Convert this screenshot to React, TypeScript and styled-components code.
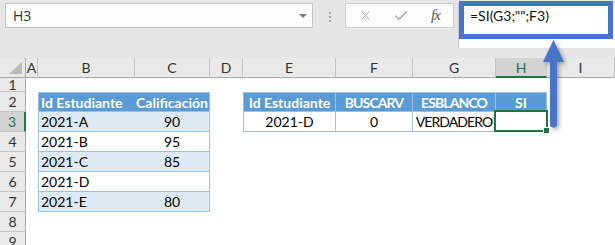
import React from 'react'
import styled, { createGlobalStyle } from 'styled-components'
import { X, Check } from 'lucide-react'

const GlobalStyle = createGlobalStyle`
  html, body {
    margin: 0;
    padding: 0;
    background: #fff;
  }
  body {
    font-family: Lato, "Liberation Sans", sans-serif;
    overflow: hidden;
  }
`

const Frame = styled.div`
  position: relative;
  width: 615px;
  height: 245px;
  overflow: hidden;
  background: #fff;
`

/* ---------- formula toolbar ---------- */

const Toolbar = styled.div`
  display: flex;
  align-items: flex-start;
  height: 58px;
  background: #e6e6e6;
`

const NameBox = styled.div`
  display: flex;
  align-items: center;
  justify-content: space-between;
  box-sizing: border-box;
  width: 308px;
  height: 25px;
  margin: 3px 0 0 5px;
  padding: 0 5px 0 7px;
  background: #fdfdfd;
  border: 1px solid #c6c6c6;
  font-family: "Open Sans", Lato, sans-serif;
  font-size: 14px;
  color: #333;
`

const Caret = styled.span`
  width: 0;
  height: 0;
  border-left: 4px solid transparent;
  border-right: 4px solid transparent;
  border-top: 4px solid #7a7a7a;
`

const Grip = styled.div`
  display: flex;
  flex-direction: column;
  gap: 2px;
  margin: 12px 0 0 16px;
`

const GripDot = styled.span`
  width: 2px;
  height: 2px;
  background: #a8a8a8;
`

const FnPanel = styled.div`
  display: grid;
  grid-template-columns: repeat(3, 35px);
  align-items: center;
  justify-items: center;
  box-sizing: border-box;
  width: 109px;
  height: 25px;
  margin: 3px 0 0 14px;
  padding-left: 2px;
  background: #fdfdfd;
  border: 1px solid #d0d0d0;
  color: #a8a8a8;
`

const FxLabel = styled.span`
  font-family: "Liberation Serif", serif;
  font-style: italic;
  font-size: 15px;
  color: #555;
  letter-spacing: -1px;
`

const FormulaBar = styled.div`
  position: relative;
  flex: 1;
  box-sizing: border-box;
  height: 45px;
  margin: 3px 0 0 4px;
  padding: 4px 0 0 11px;
  background: #fff;
  border-left: 1px solid #c6c6c6;
  font-size: 14px;
  line-height: 18px;
  color: #111;
`

const Callout = styled.div`
  position: absolute;
  top: -2px;
  left: 0;
  right: 2px;
  height: 38px;
  box-sizing: border-box;
  border: 5px solid #4775c8;
`

/* ---------- sheet grid ---------- */

const Sheet = styled.div`
  display: grid;
  grid-template-columns: 26px 12px 97px 75px 33px 93px 77px 83px 51px 68px;
  grid-template-rows: 20px 14px repeat(8, 20px);
  font-size: 14px;
  color: #000;
`

const Corner = styled.div`
  display: flex;
  justify-content: flex-end;
  align-items: flex-end;
  box-sizing: border-box;
  padding: 0 3px 3px 0;
  background: #e9e9e9;
  border-right: 1px solid #a9a9a9;
  border-bottom: 1px solid #a9a9a9;
`

const CornerMark = styled.span`
  width: 0;
  height: 0;
  border-left: 13px solid transparent;
  border-bottom: 12px solid #b9b9b9;
`

const ColHead = styled.div<{ $active?: boolean }>`
  display: flex;
  align-items: center;
  justify-content: center;
  box-sizing: border-box;
  background: ${p => (p.$active ? '#d3d3d3' : '#e9e9e9')};
  border-right: 1px solid #c4c4c4;
  border-bottom: ${p => (p.$active ? '2px solid #217346' : '1px solid #a9a9a9')};
  color: ${p => (p.$active ? '#217346' : '#333')};
  font-size: 14px;
`

const RowHead = styled.div<{ $active?: boolean }>`
  display: flex;
  align-items: center;
  justify-content: center;
  box-sizing: border-box;
  background: ${p => (p.$active ? '#d3d3d3' : '#e9e9e9')};
  border-right: ${p => (p.$active ? '2px solid #217346' : '1px solid #a9a9a9')};
  border-bottom: 1px solid #c4c4c4;
  color: ${p => (p.$active ? '#217346' : '#333')};
  font-size: 14px;
`

/* ---------- tables ---------- */

const Table = styled.div<{ $cols: string; $area: string }>`
  grid-area: ${p => p.$area};
  display: grid;
  grid-template-columns: ${p => p.$cols};
  grid-template-rows: 19px;
  grid-auto-rows: 20px;
  box-sizing: border-box;
  border: 1px solid #9bc2e6;
  border-bottom: none;
`

const Cell = styled.div<{
  $head?: boolean
  $band?: boolean
  $align?: 'left' | 'center'
  $divider?: boolean
  $caps?: boolean
}>`
  display: flex;
  align-items: center;
  justify-content: ${p => (p.$align === 'left' ? 'flex-start' : 'center')};
  box-sizing: border-box;
  padding-left: ${p => (p.$align === 'left' ? '2px' : '0')};
  background: ${p => (p.$head ? '#5b9bd5' : p.$band ? '#ddebf7' : '#fff')};
  border-bottom: 1px solid #9bc2e6;
  border-right: ${p => (p.$divider ? '1px solid #9bc2e6' : 'none')};
  color: ${p => (p.$head ? '#fff' : '#000')};
  font-weight: ${p => (p.$head ? 700 : 400)};
  letter-spacing: ${p => (p.$caps ? '-0.9px' : '0')};
  white-space: nowrap;
`

const ActiveCell = styled(Cell)`
  position: relative;

  &::after {
    content: '';
    position: absolute;
    top: -2px;
    left: -2px;
    right: -2px;
    bottom: -1px;
    border: 2px solid #217346;
  }

  &::before {
    content: '';
    position: absolute;
    right: -4px;
    bottom: -3px;
    width: 5px;
    height: 5px;
    background: #217346;
    border: 1px solid #fff;
    z-index: 1;
  }
`

const Arrow = styled.svg`
  position: absolute;
  left: 540px;
  top: 36px;
  filter: drop-shadow(2px 2px 2px rgba(0, 0, 0, 0.35));
`

const columns = ['A', 'B', 'C', 'D', 'E', 'F', 'G', 'H', 'I']

const grades = [
  { id: '2021-A', score: '90' },
  { id: '2021-B', score: '95' },
  { id: '2021-C', score: '85' },
  { id: '2021-D', score: '' },
  { id: '2021-E', score: '80' },
]

export default function App() {
  return (
    <Frame>
      <GlobalStyle />
      <Toolbar>
        <NameBox>
          <span>H3</span>
          <Caret />
        </NameBox>
        <Grip>
          <GripDot />
          <GripDot />
          <GripDot />
        </Grip>
        <FnPanel>
          <X size={15} strokeWidth={1.5} />
          <Check size={16} strokeWidth={2} />
          <FxLabel>fx</FxLabel>
        </FnPanel>
        <FormulaBar>
          =SI(G3;"";F3)
          <Callout />
        </FormulaBar>
      </Toolbar>

      <Sheet>
        <Corner>
          <CornerMark />
        </Corner>
        {columns.map(c => (
          <ColHead key={c} $active={c === 'H'}>
            {c}
          </ColHead>
        ))}
        {Array.from({ length: 9 }, (_, i) => (
          <RowHead key={i} $active={i === 2} style={{ gridColumn: 1, gridRow: i + 2 }}>
            {i + 1}
          </RowHead>
        ))}

        <Table $cols="96px 74px" $area="3 / 3 / 9 / 5">
          <Cell $head $align="left">Id Estudiante</Cell>
          <Cell $head>Calificación</Cell>
          {grades.map((g, i) => (
            <React.Fragment key={g.id}>
              <Cell $band={i % 2 === 0} $align="left">{g.id}</Cell>
              <Cell $band={i % 2 === 0}>{g.score}</Cell>
            </React.Fragment>
          ))}
        </Table>

        <Table $cols="92px 77px 83px 50px" $area="3 / 6 / 5 / 10">
          <Cell $head $divider>Id Estudiante</Cell>
          <Cell $head $divider $caps>BUSCARV</Cell>
          <Cell $head $divider $caps>ESBLANCO</Cell>
          <Cell $head>SI</Cell>
          <Cell $divider>2021-D</Cell>
          <Cell $divider>0</Cell>
          <Cell $divider $caps>VERDADERO</Cell>
          <ActiveCell />
        </Table>
      </Sheet>

      <Arrow width="32" height="95" viewBox="0 0 32 95">
        <path d="M10 24 H17 V88 A3.5 3.5 0 0 1 10 88 Z" fill="#4775c8" />
        <path d="M13.5 4 L24 26 L3 26 Z" fill="#4775c8" />
      </Arrow>
    </Frame>
  )
}
